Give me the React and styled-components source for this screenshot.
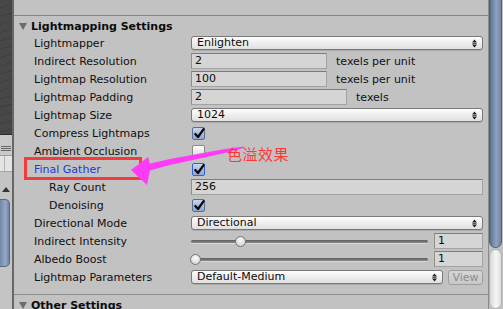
import React from "react";
import styled, { createGlobalStyle } from "styled-components";

const Global = createGlobalStyle`
  html, body { margin: 0; padding: 0; background: #c2c2c2; overflow: hidden; }
  body { font-family: "DejaVu Sans", "Noto Sans", sans-serif; font-size: 11px; color: #111; }
  * { box-sizing: border-box; }
`;

const Window = styled.div`
  position: relative;
  display: flex;
  width: 503px;
  height: 309px;
  overflow: hidden;
`;

/* ---------- left fragment of another window ---------- */
const LeftStrip = styled.div`
  width: 14px;
  flex: none;
  display: flex;
  flex-direction: column;
  border-right: 2px solid #676767;
  background: #c4c4c4;
`;
const SceneThumb = styled.div`
  height: 135px;
  flex: none;
  background: repeating-linear-gradient(165deg, #474747 0 7px, #3f3f3f 7px 8px);
  border-bottom: 1px solid #2c2c2c;
`;
const MenuBar = styled.div`
  height: 20px;
  flex: none;
  display: flex;
  flex-direction: column;
  justify-content: center;
  gap: 1px;
  padding: 6px 1px 0 1px;
  background: #c9c9c9;
`;
const MenuLine = styled.span`
  display: block;
  height: 1px;
  background: #666;
`;
const ListCell = styled.div`
  height: 17px;
  flex: none;
  background: #e4e4e4;
  border-top: 1px solid #9d9d9d;
  border-bottom: 1px solid #a5a5a5;
  display: flex;
  padding-left: 4px;
`;
const ListTick = styled.span`
  width: 1px;
  background: #b3b3b3;
`;
const ArrowCell = styled.div`
  height: 27px;
  flex: none;
  display: flex;
  align-items: flex-end;
  justify-content: center;
  padding-bottom: 7px;
`;
const UpTri = styled.span`
  width: 0;
  height: 0;
  border-left: 4px solid transparent;
  border-right: 4px solid transparent;
  border-bottom: 5px solid #333;
`;
const LeftThumb = styled.div`
  height: 68px;
  flex: none;
  width: 10px;
  border-radius: 0 5px 5px 0;
  background: linear-gradient(to right, #7388a9, #95a7c4 60%, #6f84a5);
  border: 1px solid #56698a;
  border-left: none;
`;

/* ---------- inspector ---------- */
const Inspector = styled.div`
  width: 474px;
  flex: none;
  display: flex;
  flex-direction: column;
  background: #c2c2c2;
`;
const TopGap = styled.div`
  height: 16px;
  flex: none;
  border-bottom: 1px solid #858585;
`;
const Header = styled.div`
  height: 18px;
  flex: none;
  display: flex;
  align-items: center;
  gap: 4px;
  padding: 3px 0 0 5px;
  font-weight: bold;
  line-height: 15px;
  color: #0b0b0b;
`;
const Fold = styled.span`
  width: 0;
  height: 0;
  border-left: 4px solid transparent;
  border-right: 4px solid transparent;
  border-top: 7px solid #6b6b6b;
`;
const Row = styled.div`
  display: grid;
  grid-template-columns: 177px 292px;
  height: 18px;
  flex: none;
  align-items: center;
`;
const Label = styled.div`
  padding: 1px 0 0 ${(p) => (p.$indent ? 35 : 20)}px;
  line-height: 17px;
  white-space: nowrap;
  color: ${(p) => (p.$active ? "#1a3bd6" : "#0f0f0f")};
`;
const Control = styled.div`
  display: flex;
  align-items: center;
  gap: ${(p) => p.$gap ?? 9}px;
  height: 18px;
`;
const Popup = styled.div`
  width: ${(p) => p.$w ?? 292}px;
  height: 14px;
  flex: none;
  display: flex;
  align-items: center;
  justify-content: space-between;
  padding: 0 5px 0 5px;
  border: 1px solid #797979;
  border-radius: 3px;
  background: linear-gradient(#fdfdfd, #e0e0e0);
  box-shadow: 0 1px 0 rgba(0, 0, 0, 0.12);
  line-height: 12px;
  color: #0b0b0b;
`;
const Field = styled.div`
  width: ${(p) => p.$w}px;
  height: 16px;
  flex: none;
  padding-left: 3px;
  line-height: 14px;
  background: #d5d5d5;
  border: 1px solid #a3a3a3;
  border-top-color: #7d7d7d;
  border-left-color: #8e8e8e;
  color: #0b0b0b;
`;
const Unit = styled.span`
  white-space: nowrap;
  padding-top: 1px;
  color: #111;
`;
const Box = styled.span`
  position: relative;
  margin-left: 1px;
  width: 13px;
  height: 13px;
  flex: none;
  border-radius: 2px;
  border: 1px solid ${(p) => (p.$focus ? "#2f62d8" : p.$checked ? "#5d6f90" : "#8a8a8a")};
  background: ${(p) =>
    p.$checked
      ? "linear-gradient(#c9d6ee, #8fa7d2)"
      : "linear-gradient(#fdfdfd, #d9d9d9)"};
`;
const Check = styled.svg`
  position: absolute;
  left: 0px;
  top: -2px;
`;
const SliderTrack = styled.div`
  position: relative;
  width: 237px;
  height: 3px;
  flex: none;
  border-radius: 2px;
  background: linear-gradient(#5e5e5e, #8a8a8a);
  box-shadow: 0 1px 0 #d8d8d8;
`;
const Knob = styled.span`
  position: absolute;
  top: -4px;
  width: 11px;
  height: 11px;
  border-radius: 50%;
  border: 1px solid #767676;
  background: radial-gradient(circle at 50% 35%, #ffffff, #d6d6d6 70%, #bdbdbd);
`;
const ViewButton = styled.div`
  width: 35px;
  height: 15px;
  flex: none;
  border: 1px solid #9d9d9d;
  border-radius: 3px;
  background: linear-gradient(#d6d6d6, #c8c8c8);
  color: #8c8c8c;
  text-align: center;
  line-height: 13px;
`;
const Spacer = styled.div`
  height: 9px;
  flex: none;
  border-bottom: 1px solid #8d8d8d;
`;

/* ---------- right scrollbar ---------- */
const ScrollBar = styled.div`
  width: 15px;
  flex: none;
  display: flex;
  flex-direction: column;
  border-left: 1px solid #8a8a8a;
  background: #c2c2c2;
`;
const ScrollThumb = styled.div`
  height: 248px;
  flex: none;
  margin-right: 1px;
  border-radius: 0 0 7px 7px;
  border: 1px solid #4b5f80;
  border-top: none;
  background: linear-gradient(to right, #5a7092, #8fa1be 55%, #7487a7);
`;
const ScrollTrack = styled.div`
  flex: 1;
  margin: 1px 1px 0 0;
  border-radius: 7px;
  border: 1px solid #b0b0b0;
  background: linear-gradient(to right, #d6d6d6, #f6f6f6 55%, #dedede);
`;

/* ---------- annotation overlays ---------- */
const RedBox = styled.div`
  position: absolute;
  left: 24px;
  top: 157px;
  width: 118px;
  height: 23px;
  border: 3px solid #f33b3b;
  pointer-events: none;
`;
const ArrowLayer = styled.svg`
  position: absolute;
  left: 0;
  top: 0;
  pointer-events: none;
`;
const Note = styled.div`
  position: absolute;
  left: 227px;
  top: 144px;
  font-family: "Noto Sans CJK SC", sans-serif;
  font-size: 15px;
  letter-spacing: 0.5px;
  line-height: 20px;
  color: #ff3636;
`;

const PopArrows = () => (
  <svg width="5" height="9" viewBox="0 0 5 9">
    <path d="M0 3.5 L2.5 0.5 L5 3.5 Z M0 5.5 L2.5 8.5 L5 5.5 Z" fill="#222" />
    <rect x="0.5" y="4" width="4" height="1" fill="#555" />
  </svg>
);

const Checkbox = ({ checked, focus }) => (
  <Box $checked={checked} $focus={focus}>
    {checked && (
      <Check width="13" height="14" viewBox="0 0 13 14">
        <path d="M2.3 8 L5 11 L10.6 3.2" fill="none" stroke="#0a0a0a" strokeWidth="2.3" strokeLinecap="round" strokeLinejoin="round" />
      </Check>
    )}
  </Box>
);

const Slider = ({ value, max }) => (
  <Control $gap={6}>
    <SliderTrack>
      <Knob style={{ left: `${(value / max) * 226 - 1}px` }} />
    </SliderTrack>
    <Field $w={49}>1</Field>
  </Control>
);

export default function App() {
  return (
    <>
      <Global />
      <Window>
        <LeftStrip>
          <SceneThumb />
          <MenuBar>
            <MenuLine />
            <MenuLine />
            <MenuLine />
          </MenuBar>
          <ListCell>
            <ListTick />
          </ListCell>
          <ArrowCell>
            <UpTri />
          </ArrowCell>
          <LeftThumb />
        </LeftStrip>

        <Inspector>
          <TopGap />
          <Header>
            <Fold />
            Lightmapping Settings
          </Header>
          <Row>
            <Label>Lightmapper</Label>
            <Control>
              <Popup>Enlighten<PopArrows /></Popup>
            </Control>
          </Row>
          <Row>
            <Label>Indirect Resolution</Label>
            <Control>
              <Field $w={136}>2</Field>
              <Unit>texels per unit</Unit>
            </Control>
          </Row>
          <Row>
            <Label>Lightmap Resolution</Label>
            <Control>
              <Field $w={136}>100</Field>
              <Unit>texels per unit</Unit>
            </Control>
          </Row>
          <Row>
            <Label>Lightmap Padding</Label>
            <Control>
              <Field $w={156}>2</Field>
              <Unit>texels</Unit>
            </Control>
          </Row>
          <Row>
            <Label>Lightmap Size</Label>
            <Control>
              <Popup>1024<PopArrows /></Popup>
            </Control>
          </Row>
          <Row>
            <Label>Compress Lightmaps</Label>
            <Control><Checkbox checked /></Control>
          </Row>
          <Row>
            <Label>Ambient Occlusion</Label>
            <Control><Checkbox /></Control>
          </Row>
          <Row>
            <Label $active>Final Gather</Label>
            <Control><Checkbox checked focus /></Control>
          </Row>
          <Row>
            <Label $indent>Ray Count</Label>
            <Control><Field $w={292}>256</Field></Control>
          </Row>
          <Row>
            <Label $indent>Denoising</Label>
            <Control><Checkbox checked /></Control>
          </Row>
          <Row>
            <Label>Directional Mode</Label>
            <Control>
              <Popup>Directional<PopArrows /></Popup>
            </Control>
          </Row>
          <Row>
            <Label>Indirect Intensity</Label>
            <Slider value={1} max={5} />
          </Row>
          <Row>
            <Label>Albedo Boost</Label>
            <Slider value={0} max={10} />
          </Row>
          <Row>
            <Label>Lightmap Parameters</Label>
            <Control $gap={5}>
              <Popup $w={252}>Default-Medium<PopArrows /></Popup>
              <ViewButton>View</ViewButton>
            </Control>
          </Row>
          <Spacer />
          <Header>
            <Fold />
            Other Settings
          </Header>
        </Inspector>

        <ScrollBar>
          <ScrollThumb />
          <ScrollTrack />
        </ScrollBar>

        <RedBox />
        <ArrowLayer width="503" height="309" viewBox="0 0 503 309">
          <path
            d="M131 170 L148 157 L150 163.5 L170 159 L225 149 L244 146.5 L244 147.8 L225 153 L170 165 L150 170.5 L147 185 Z"
            fill="#ff3cf5"
          />
        </ArrowLayer>
        <Note>色溢效果</Note>
      </Window>
    </>
  );
}
